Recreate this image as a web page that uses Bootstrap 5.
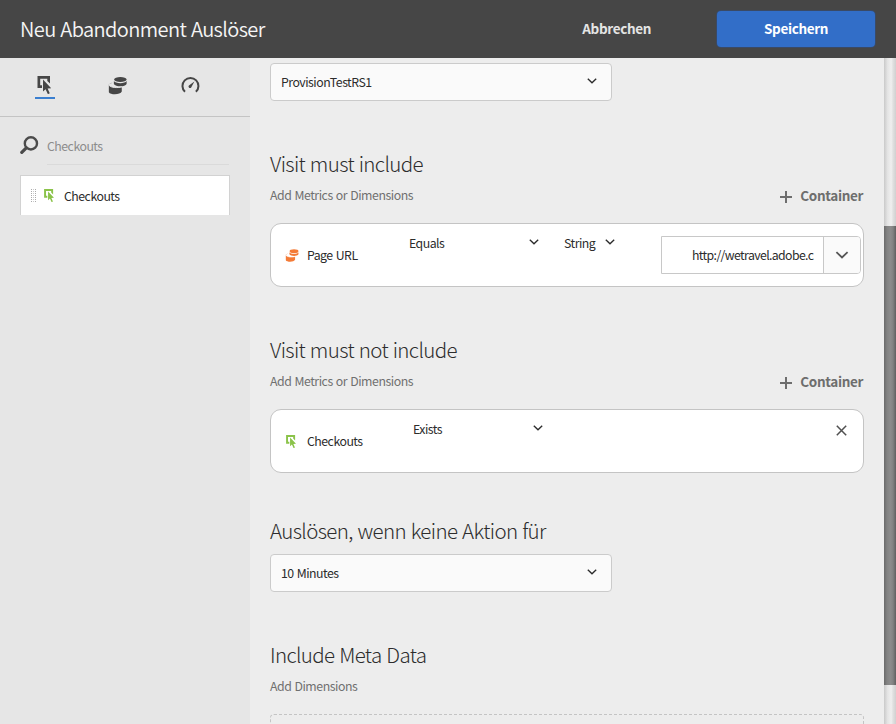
<!DOCTYPE html>
<html lang="de">
<head>
<meta charset="utf-8">
<meta name="viewport" content="width=device-width, initial-scale=1">
<title>Neu Abandonment Auslöser</title>
<link href="https://cdn.jsdelivr.net/npm/bootstrap@5.3.0/dist/css/bootstrap.min.css" rel="stylesheet">
<style>
body{font-family:"Noto Sans CJK SC","Open Sans",sans-serif;font-size:12.3px;line-height:20px;letter-spacing:-.5px;word-spacing:.8px;color:#2c2c2c;background:#ededed}
svg{display:block;flex:none}
.app{height:724px}
.topbar{height:58px;background:#464646;color:#f5f5f5;padding:0 21px 0 20px}
.topbar h1{font-size:20px;font-weight:350;line-height:28px;letter-spacing:-.6px}
.btn-plain,.btn-save{font-size:13.5px;font-weight:700;line-height:20px;letter-spacing:-.35px;border-radius:4px;padding:0 0 2px}
.btn-plain{color:#e4e4e4;margin-right:66px}
.btn-save{width:158px;height:36px;color:#fff;background:#326ec8;box-shadow:0 0 0 1px #3a4a66}
.side{width:250px;background:#e6e6e6}
.tabs{height:59px;border-bottom:1px solid #c4c4c4;padding:18px 0 0 35px;gap:53px;color:#464646}
.tab-on{border-bottom:2px solid #3a7fd0;height:23px}
.search{padding:19px 20px 0}
.search-field{border-bottom:1px solid #dadada;height:29px;margin-left:8px;color:#8c8c8c;line-height:20px;width:182px}
.drag-item{margin:10px 20px 0;height:40px;background:#fff;border:1px solid #d2d2d2;border-bottom:0;padding-left:10px}
.pane{padding:5px 20px 0}
.pick{width:342px;height:38px;border:1px solid #cbcbcb;border-radius:4px;background:#fafafa;padding:0 14px 0 10px}
.caret{margin-bottom:2px}
.pane h2{font-size:20.5px;font-weight:300;line-height:28px;letter-spacing:-.63px;margin:0}
.hint{color:#707070;padding-top:8px;letter-spacing:-.46px}
.add{color:#6e6e6e;font-size:13.5px;font-weight:700;letter-spacing:-.35px;margin-right:1px}
.rule-box{height:64px;border:1px solid #c4c4c4;border-radius:11px;background:#fff;padding:0 2px 0 14px}
.url{height:38px;width:200px;border:1px solid #c8c8c8;border-radius:0 4px 4px 0}
.url-text{width:124px;margin-left:30px;line-height:36px;letter-spacing:-.62px}
.url-btn{width:37px;border-left:1px solid #c8c8c8;border-radius:0 3px 3px 0;background:#fafafa;color:#555}
.dropzone{height:40px;border:1px dashed #c4c4c4;border-radius:4px}
.track{width:12px;background:linear-gradient(90deg,#c9c9c9,#e4e4e4 30%,#efefef 60%,#e0e0e0 75%,#d0d0d0)}
.thumb{margin-top:168px;height:459px;background:linear-gradient(90deg,#6a6a6a,#828282 25%,#8c8c8c 55%,#828282 75%,#606060)}
</style>
</head>
<body>
<svg class="d-none">
<symbol id="chev" viewBox="0 0 10 6"><path d="M.8.8 5 4.800 9.200.8" fill="none" stroke="currentColor" stroke-width="1.350"/></symbol>
<symbol id="click" viewBox="0 0 18 18"><path d="M2 0h12.500v7.500l-2.700-2.600V2.700H4.700v6.600H6.500V12H2z" fill="currentColor"/><path d="M7.500 3.500v12l2.600-2.300 2.300 5 1.900-.9-2.200-4.900 3.600-.2z" fill="currentColor"/></symbol>
<symbol id="discs" viewBox="0 0 20 19"><g fill="currentColor"><ellipse cx="13" cy="3.200" rx="6.500" ry="2.700"/><path d="M6.200 4.800C8 7.800 18 7.800 19.600 4.800V7.800C18 11 8 11 6.200 7.800z"/><path d="M4.800 6.500C2.500 6.600 1 7.500.9 8.800 2 12 12 12.500 14.500 11V15.800C13 19.500 2.500 19.500.9 16.500V8z"/></g><path d="M.8 9C3.500 12.300 10 12 14.700 11" fill="none" stroke="var(--gap)" stroke-width="1"/></symbol>
</svg>
<div class="app d-flex flex-column overflow-hidden">
 <header class="topbar d-flex align-items-center flex-shrink-0">
  <h1 class="m-0 me-auto">Neu Abandonment Auslöser</h1>
  <button class="btn btn-plain border-0">Abbrechen</button>
  <button class="btn btn-save border-0">Speichern</button>
 </header>
 <div class="d-flex flex-grow-1 overflow-hidden">
  <aside class="side flex-shrink-0">
   <nav class="tabs d-flex">
    <div class="tab-on"><svg width="20" height="19" viewBox="0 0 20 19"><use href="#click" x=".5" width="18" height="18"/></svg></div>
    <svg width="19" height="19" style="--gap:#e6e6e6"><use href="#discs"/></svg>
    <svg width="20" height="19" viewBox="0 0 20 19"><path d="M5 15.800A8 8 0 1 1 15.900 15.800" fill="none" stroke="currentColor" stroke-width="2"/><path d="M14.400 5.500 11.200 11.500A1.500 1.500 0 1 1 8.900 9.500z" fill="currentColor"/></svg>
   </nav>
   <div class="search d-flex">
    <svg width="19" height="19" viewBox="0 0 19 19" fill="none" stroke="#4b4b4b"><circle cx="10.900" cy="7.400" r="6.100" stroke-width="2.400"/><path d="M6.300 11.900 1.800 16.400" stroke-width="3.200" stroke-linecap="round"/></svg>
    <div class="search-field">Checkouts</div>
   </div>
   <div class="drag-item d-flex align-items-center">
    <svg width="5" height="13" viewBox="0 0 5 13" stroke="#aaa" stroke-dasharray="1 1"><path d="M.5 0V13M4.500 0V13"/><path d="M2.500 0V13" stroke="#ccc"/></svg>
    <svg style="margin-left:8px" width="11" height="13" viewBox="2 0 15 18" color="#8bc34a"><use href="#click" width="18" height="18"/></svg>
    <span style="margin-left:9px;padding-top:1px">Checkouts</span>
   </div>
  </aside>
  <main class="pane flex-grow-1">
   <div class="pick d-flex align-items-center justify-content-between"><span>ProvisionTestRS1</span><svg class="caret" width="10" height="6"><use href="#chev"/></svg></div>
   <section style="margin-top:48px">
    <h2>Visit must include</h2>
    <div class="d-flex justify-content-between hint">
     <span>Add Metrics or Dimensions</span>
     <span class="add d-flex align-items-center"><svg style="margin:3px 8px 0 0" width="12" height="12"><path d="M6 0V12M0 6H12" stroke="currentColor" stroke-width="2"/></svg>Container</span>
    </div>
    <div class="rule-box d-flex" style="margin-top:18px">
     <div class="d-flex align-items-center" style="width:124px"><svg width="14" height="13" viewBox="0 0 20 19" color="#f47b37" style="--gap:#fff"><use href="#discs" width="20" height="19"/></svg><span class="ms-2">Page URL</span></div>
     <div class="d-flex align-items-center justify-content-between" style="width:130px;height:38px"><span>Equals</span><svg class="caret" width="10" height="6"><use href="#chev"/></svg></div>
     <div class="d-flex align-items-center justify-content-between" style="width:51px;height:38px;margin-left:25px"><span>String</span><svg class="caret" width="10" height="6"><use href="#chev"/></svg></div>
     <div class="url d-flex ms-auto align-self-center"><div class="url-text text-nowrap">http://wetravel.adobe.c</div><div class="url-btn ms-auto d-flex align-items-center justify-content-center"><svg width="14" height="8"><use href="#chev"/></svg></div></div>
    </div>
   </section>
   <section style="margin-top:48px">
    <h2>Visit must not include</h2>
    <div class="d-flex justify-content-between hint">
     <span>Add Metrics or Dimensions</span>
     <span class="add d-flex align-items-center"><svg style="margin:3px 8px 0 0" width="12" height="12"><path d="M6 0V12M0 6H12" stroke="currentColor" stroke-width="2"/></svg>Container</span>
    </div>
    <div class="rule-box d-flex" style="margin-top:18px">
     <div class="d-flex align-items-center" style="width:128px"><svg style="margin-left:1px" width="11" height="13" viewBox="2 0 15 18" color="#8bc34a"><use href="#click" width="18" height="18"/></svg><span style="margin-left:10px">Checkouts</span></div>
     <div class="d-flex align-items-center justify-content-between" style="width:130px;height:38px"><span>Exists</span><svg class="caret" width="10" height="6"><use href="#chev"/></svg></div>
     <svg class="ms-auto" width="11" height="11" style="margin:15px 14px"><path d="M.8.8 10.200 10.200M10.200.8.8 10.200" stroke="#505050" stroke-width="1.500"/></svg>
    </div>
   </section>
   <section style="margin-top:43px">
    <h2>Auslösen, wenn keine Aktion für</h2>
    <div class="pick d-flex align-items-center justify-content-between" style="margin-top:10px"><span>10 Minutes</span><svg class="caret" width="10" height="6"><use href="#chev"/></svg></div>
   </section>
   <section style="margin-top:48px">
    <h2>Include Meta Data</h2>
    <div class="hint">Add Dimensions</div>
    <div class="dropzone" style="margin-top:18px"></div>
   </section>
  </main>
  <div class="track flex-shrink-0"><div class="thumb"></div></div>
 </div>
</div>
<script src="https://cdn.jsdelivr.net/npm/bootstrap@5.3.0/dist/js/bootstrap.bundle.min.js"></script>
</body>
</html>
